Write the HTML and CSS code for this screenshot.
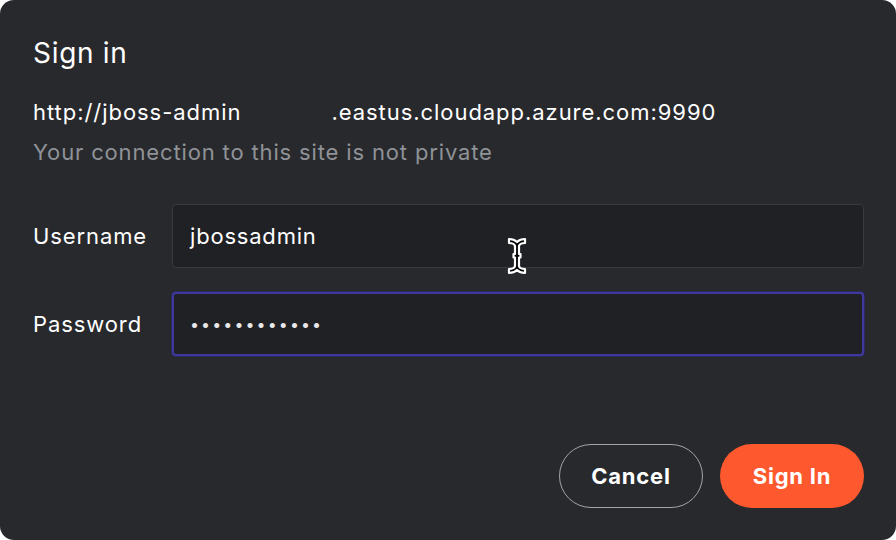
FILE: index.html
```html
<!DOCTYPE html>
<html>
<head>
<meta charset="utf-8">
<link rel="stylesheet" href="styles.css">
</head>
<body>
<div class="dialog">
  <h1 class="title">Sign in</h1>
  <div class="url"><span>http://jboss-admin</span><span class="redact"></span><span>.eastus.cloudapp.azure.com:9990</span></div>
  <div class="note">Your connection to this site is not private</div>
  <div class="form">
    <div class="row">
      <label class="label">Username</label>
      <div class="field">jbossadmin</div>
    </div>
    <div class="row">
      <label class="label">Password</label>
      <div class="field focus"><span class="dots">••••••••••••</span></div>
    </div>
  </div>
  <div class="actions">
    <button class="btn cancel">Cancel</button>
    <button class="btn primary">Sign In</button>
  </div>
  <svg class="ibeam" width="22" height="40" viewBox="0 0 22 40">
    <path d="M3 3 C6.5 3 9 4 11 6 C13 4 15.5 3 19 3 L19 7 C16 7 13.5 8 13 10 L13 18 L14.5 18 L14.5 21.5 L13 21.5 L13 30 C13.5 32 16 33 19 33 L19 37 C15.5 37 13 36 11 34 C9 36 6.5 37 3 37 L3 33 C6 33 8.5 32 9 30 L9 21.5 L7.5 21.5 L7.5 18 L9 18 L9 10 C8.5 8 6 7 3 7 Z" fill="#000" stroke="#fff" stroke-width="2.2" stroke-linejoin="round"/>
  </svg>
</div>
</body>
</html>
```
FILE: styles.css
```css
html, body {
  margin: 0;
  padding: 0;
  background: #ffffff;
}
.dialog {
  position: relative;
  box-sizing: border-box;
  width: 896px;
  height: 540px;
  background: #28292d;
  border-radius: 14px;
  padding: 35px 32px 0 33px;
  font-family: Inter, "Noto Sans", sans-serif;
  color: #ffffff;
  overflow: hidden;
}
.title {
  margin: 0;
  font-size: 28px;
  font-weight: 400;
  letter-spacing: 0.7px;
  line-height: 36px;
}
.url {
  margin-top: 26px;
  font-size: 22px;
  letter-spacing: 0.95px;
  line-height: 30px;
  display: flex;
}
.redact {
  display: inline-block;
  width: 90px;
}
.note {
  margin-top: 10px;
  font-size: 22px;
  letter-spacing: 0.85px;
  line-height: 30px;
  color: #8f9297;
}
.form {
  margin-top: 37px;
  display: flex;
  flex-direction: column;
  gap: 24px;
}
.row {
  display: flex;
  align-items: center;
}
.label {
  width: 139px;
  flex: none;
  font-size: 22px;
  letter-spacing: 0.9px;
}
.field {
  flex: 1;
  box-sizing: border-box;
  height: 64px;
  background: #202124;
  border: 1px solid #3a3b3f;
  border-radius: 4px;
  padding-left: 17px;
  display: flex;
  align-items: center;
  font-size: 22px;
  letter-spacing: 0.8px;
  color: #ffffff;
}
.field.focus {
  border: 2px solid #3f399e;
  box-shadow: 0 0 0 1px #2b2960;
  padding-left: 16px;
}
.dots {
  letter-spacing: 2.1px;
  font-size: 16px;
  color: #e8e8ea;
}
.actions {
  margin-top: 88px;
  display: flex;
  justify-content: flex-end;
  gap: 17px;
}
.btn {
  box-sizing: border-box;
  height: 64px;
  border-radius: 32px;
  font-family: Inter, "Noto Sans", sans-serif;
  font-size: 22px;
  font-weight: 700;
  letter-spacing: 0.8px;
  color: #ffffff;
  cursor: pointer;
}
.cancel {
  width: 144px;
  background: transparent;
  border: 1px solid #a3a4a7;
}
.primary {
  width: 144px;
  background: #fe592e;
  border: none;
}
.ibeam {
  position: absolute;
  left: 506px;
  top: 236px;
}
```
